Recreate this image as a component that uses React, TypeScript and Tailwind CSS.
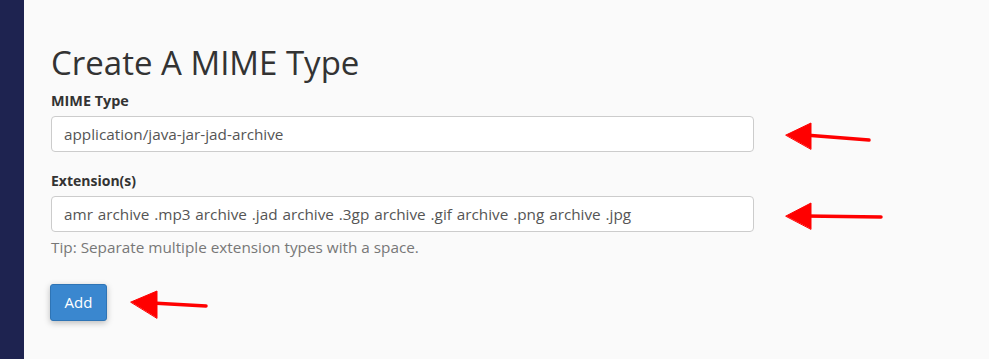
import React from "react";

export default function App() {
  return (
    <div className="relative flex h-[359px] w-[989px] overflow-hidden bg-[#fafafa]" style={{ fontFamily: '"Open Sans", sans-serif' }}>
      <div className="w-[24px] shrink-0 bg-[#1e2350]" />
      <div className="flex flex-col pl-[27px] pt-[43px]">
        <h1 className="text-[33px] leading-[40px] font-normal text-[#333]">Create A MIME Type</h1>
        <label className="mt-[8px] text-[14.4px] leading-[20px] font-bold text-[#333]">MIME Type</label>
        <div className="mt-[5px] flex h-[36px] w-[703px] items-center rounded-[4px] border border-[#ccc] bg-white px-[12px] text-[15.3px] text-[#555]">
          application/java-jar-jad-archive
        </div>
        <label className="mt-[19px] text-[14px] leading-[20px] font-bold text-[#333]">Extension(s)</label>
        <div className="mt-[5px] flex h-[36px] w-[703px] items-center rounded-[4px] border border-[#ccc] bg-white px-[12px] text-[15.3px] text-[#555] [word-spacing:0.9px]">
          amr archive .mp3 archive .jad archive .3gp archive .gif archive .png archive .jpg
        </div>
        <p className="mt-[5px] text-[15.3px] leading-[20px] text-[#777]">Tip: Separate multiple extension types with a space.</p>
        <button className="mt-[27px] h-[37px] w-[57px] -ml-px rounded-[3px] border border-[#2e74b5] bg-[#3a87cf] text-[15px] text-white shadow-[0_2px_6px_rgba(0,0,0,0.25)]">
          Add
        </button>
      </div>
      <svg className="pointer-events-none absolute left-0 top-0" width="989" height="359" viewBox="0 0 989 359">
        <g fill="#f00" stroke="#f00" strokeLinecap="round" strokeLinejoin="round">
          <line x1="805" y1="135" x2="869" y2="140" strokeWidth="3.5" />
          <polygon points="786,135 811,123 811,149" strokeWidth="1" />
          <line x1="805" y1="216" x2="881" y2="217" strokeWidth="3.5" />
          <polygon points="786,216 811,203 811,229" strokeWidth="1" />
          <line x1="152" y1="303" x2="206" y2="306" strokeWidth="3.5" />
          <polygon points="131,302 157,291 157,318" strokeWidth="1" />
        </g>
      </svg>
    </div>
  );
}
